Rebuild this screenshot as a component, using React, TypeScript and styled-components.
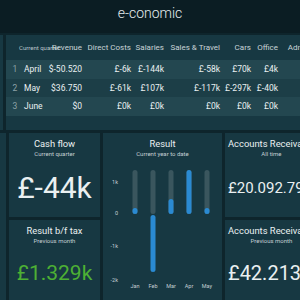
import React from "react"
import styled, { createGlobalStyle } from "styled-components"

const GlobalStyle = createGlobalStyle`
  html, body {
    margin: 0;
    padding: 0;
    background: #0e252c;
    overflow: hidden;
  }
  body {
    font-family: Roboto, "Liberation Sans", Arial, sans-serif;
    color: #eaf0f1;
  }
`

const colors = {
  gap: "#0e252c",
  header: "#0b1d23",
  panel: "#173842",
  rowLight: "#234750",
  rowDark: "#1c3e47",
  text: "#eaf0f1",
  muted: "#c3cfd2",
  index: "#8ea2a7",
  green: "#4db034",
  blue: "#2a8ad2",
  track: "#3a565e",
}

const Page = styled.div`
  width: 300px;
  height: 300px;
  overflow: hidden;
  background: ${colors.gap};
`

const Header = styled.header`
  height: 33px;
  background: ${colors.header};
  display: flex;
  justify-content: center;
  align-items: flex-start;
  padding-top: 4px;
  box-sizing: border-box;
`

const Brand = styled.h1`
  margin: 0;
  font-size: 14px;
  line-height: 18px;
  font-weight: 300;
  color: #e4ebed;
`

const Board = styled.div`
  display: flex;
  flex-direction: column;
  gap: 3px;
  padding-top: 2px;
`

const Strip = styled.div<{ $width: number }>`
  display: flex;
  gap: 3px;
  & > .edge {
    flex: 0 0 ${(p) => p.$width}px;
    background: ${colors.panel};
  }
`

const Edge = styled.div.attrs({ className: "edge" })``

const TablePanel = styled.section`
  flex: 0 0 auto;
  width: 340px;
  height: 95px;
  background: ${colors.panel};
`

const cols = "18px 21px 37px 49px 33px 56px 31px 27px 62px"

const HeadRow = styled.div`
  display: grid;
  grid-template-columns: ${cols};
  height: 25px;
  align-items: center;
  font-size: 8px;
  color: #c8d3d6;
  white-space: nowrap;
`

const Period = styled.div`
  grid-column: 1 / 3;
  padding-left: 13px;
  font-size: 6px;
  color: #b9c6ca;
  overflow: visible;
`

const HeadCell = styled.div`
  text-align: right;
  overflow: visible;
  direction: rtl;
`

const Row = styled.div<{ $light: boolean }>`
  display: grid;
  grid-template-columns: ${cols};
  height: 18.5px;
  align-items: center;
  background: ${(p) => (p.$light ? colors.rowLight : colors.rowDark)};
  font-size: 8.5px;
  white-space: nowrap;
`

const Index = styled.div`
  text-align: center;
  color: ${colors.index};
`

const Name = styled.div`
  color: ${colors.text};
`

const Value = styled.div`
  text-align: right;
  color: ${colors.text};
`

const Cards = styled.div`
  display: flex;
  gap: 3px;
`

const Column = styled.div<{ $width: number }>`
  flex: 0 0 ${(p) => p.$width}px;
  display: flex;
  flex-direction: column;
  gap: 3px;
`

const Card = styled.div<{ $height: number }>`
  height: ${(p) => p.$height}px;
  background: ${colors.panel};
  display: flex;
  flex-direction: column;
  padding: 5px 3px 0;
  box-sizing: border-box;
  overflow: hidden;
  text-align: center;
`

const Title = styled.div`
  font-size: 9.4px;
  line-height: 12px;
  white-space: nowrap;
  color: ${colors.text};
`

const Subtitle = styled.div`
  font-size: 6px;
  line-height: 8px;
  white-space: nowrap;
  color: ${colors.muted};
`

const Figure = styled.div<{ $size: number; $green?: boolean }>`
  flex: 1;
  display: flex;
  align-items: center;
  justify-content: center;
  font-size: ${(p) => p.$size}px;
  white-space: nowrap;
  color: ${(p) => (p.$green ? colors.green : colors.text)};
`

const WideFigure = styled(Figure)`
  justify-content: flex-start;
`

const ChartSvg = styled.svg`
  display: block;
  margin: 0 -3px;
  font-family: Roboto, "Liberation Sans", Arial, sans-serif;
`

const heads = ["Revenue", "Direct Costs", "Salaries", "Sales & Travel", "Cars", "Office", "Administration"]

const rows = [
  { name: "April", values: ["$-50.520", "£-6k", "£-144k", "£-58k", "£70k", "£4k", "£-3k"] },
  { name: "May", values: ["$36.750", "£-61k", "£107k", "£-117k", "£-297k", "£-40k", "£-5k"] },
  { name: "June", values: ["$0", "£0k", "£0k", "£0k", "£0k", "£0k", "£0k"] },
]

// bar tops/bottoms in chart coordinates (zero line at y=56)
const bars = [
  { month: "Jan", x: 32, from: 50, to: 56 },
  { month: "Feb", x: 50, from: 57, to: 114 },
  { month: "Mar", x: 68, from: 41, to: 56 },
  { month: "Apr", x: 86, from: 12, to: 56 },
  { month: "May", x: 104, from: 50, to: 56 },
]

const ticks = [
  { label: "1k", y: 24.5 },
  { label: "0", y: 55.5 },
  { label: "-1k", y: 89 },
  { label: "-2k", y: 123 },
]

const ResultChart = () => (
  <ChartSvg width={119} height={142} viewBox="0 0 119 142">
    {ticks.map((t) => (
      <text key={t.label} x={15} y={t.y} fontSize={5.5} fill="#c3cfd2" textAnchor="end" dominantBaseline="middle">
        {t.label}
      </text>
    ))}
    {bars.map((b) => (
      <g key={b.month}>
        <rect x={b.x - 2.5} y={12} width={5} height={44} rx={2.5} fill={colors.track} />
        <rect x={b.x - 2.5} y={b.from} width={5} height={b.to - b.from} rx={2.5} fill={colors.blue} />
        <text x={b.x} y={129} fontSize={5.5} fill="#c3cfd2" textAnchor="middle" dominantBaseline="middle">
          {b.month}
        </text>
      </g>
    ))}
  </ChartSvg>
)

export default function App() {
  return (
    <>
      <GlobalStyle />
      <Page>
        <Header>
          <Brand>e-conomic</Brand>
        </Header>
        <Board>
          <Strip $width={3}>
            <Edge />
            <TablePanel>
              <HeadRow>
                <Period>Current quarter</Period>
                {heads.map((h) => (
                  <HeadCell key={h}>{h}</HeadCell>
                ))}
              </HeadRow>
              {rows.map((r, i) => (
                <Row key={r.name} $light={i % 2 === 0}>
                  <Index>{i + 1}</Index>
                  <Name>{r.name}</Name>
                  {r.values.map((v, j) => (
                    <Value key={j}>{v}</Value>
                  ))}
                </Row>
              ))}
            </TablePanel>
          </Strip>
          <Strip $width={6}>
            <Edge />
            <Cards>
              <Column $width={91}>
                <Card $height={84}>
                  <Title>Cash flow</Title>
                  <Subtitle>Current quarter</Subtitle>
                  <Figure $size={30}>£-44k</Figure>
                </Card>
                <Card $height={80}>
                  <Title>Result b/f tax</Title>
                  <Subtitle>Previous month</Subtitle>
                  <Figure $size={21} $green>
                    £1.329k
                  </Figure>
                </Card>
              </Column>
              <Column $width={119}>
                <Card $height={167}>
                  <Title>Result</Title>
                  <Subtitle>Current year to date</Subtitle>
                  <ResultChart />
                </Card>
              </Column>
              <Column $width={90}>
                <Card $height={84}>
                  <Title>Accounts Receivable</Title>
                  <Subtitle>All time</Subtitle>
                  <WideFigure $size={15}>£20.092.797</WideFigure>
                </Card>
                <Card $height={80}>
                  <Title>Accounts Receivable</Title>
                  <Subtitle>Previous month</Subtitle>
                  <WideFigure $size={20}>£42.213</WideFigure>
                </Card>
              </Column>
            </Cards>
          </Strip>
        </Board>
      </Page>
    </>
  )
}
